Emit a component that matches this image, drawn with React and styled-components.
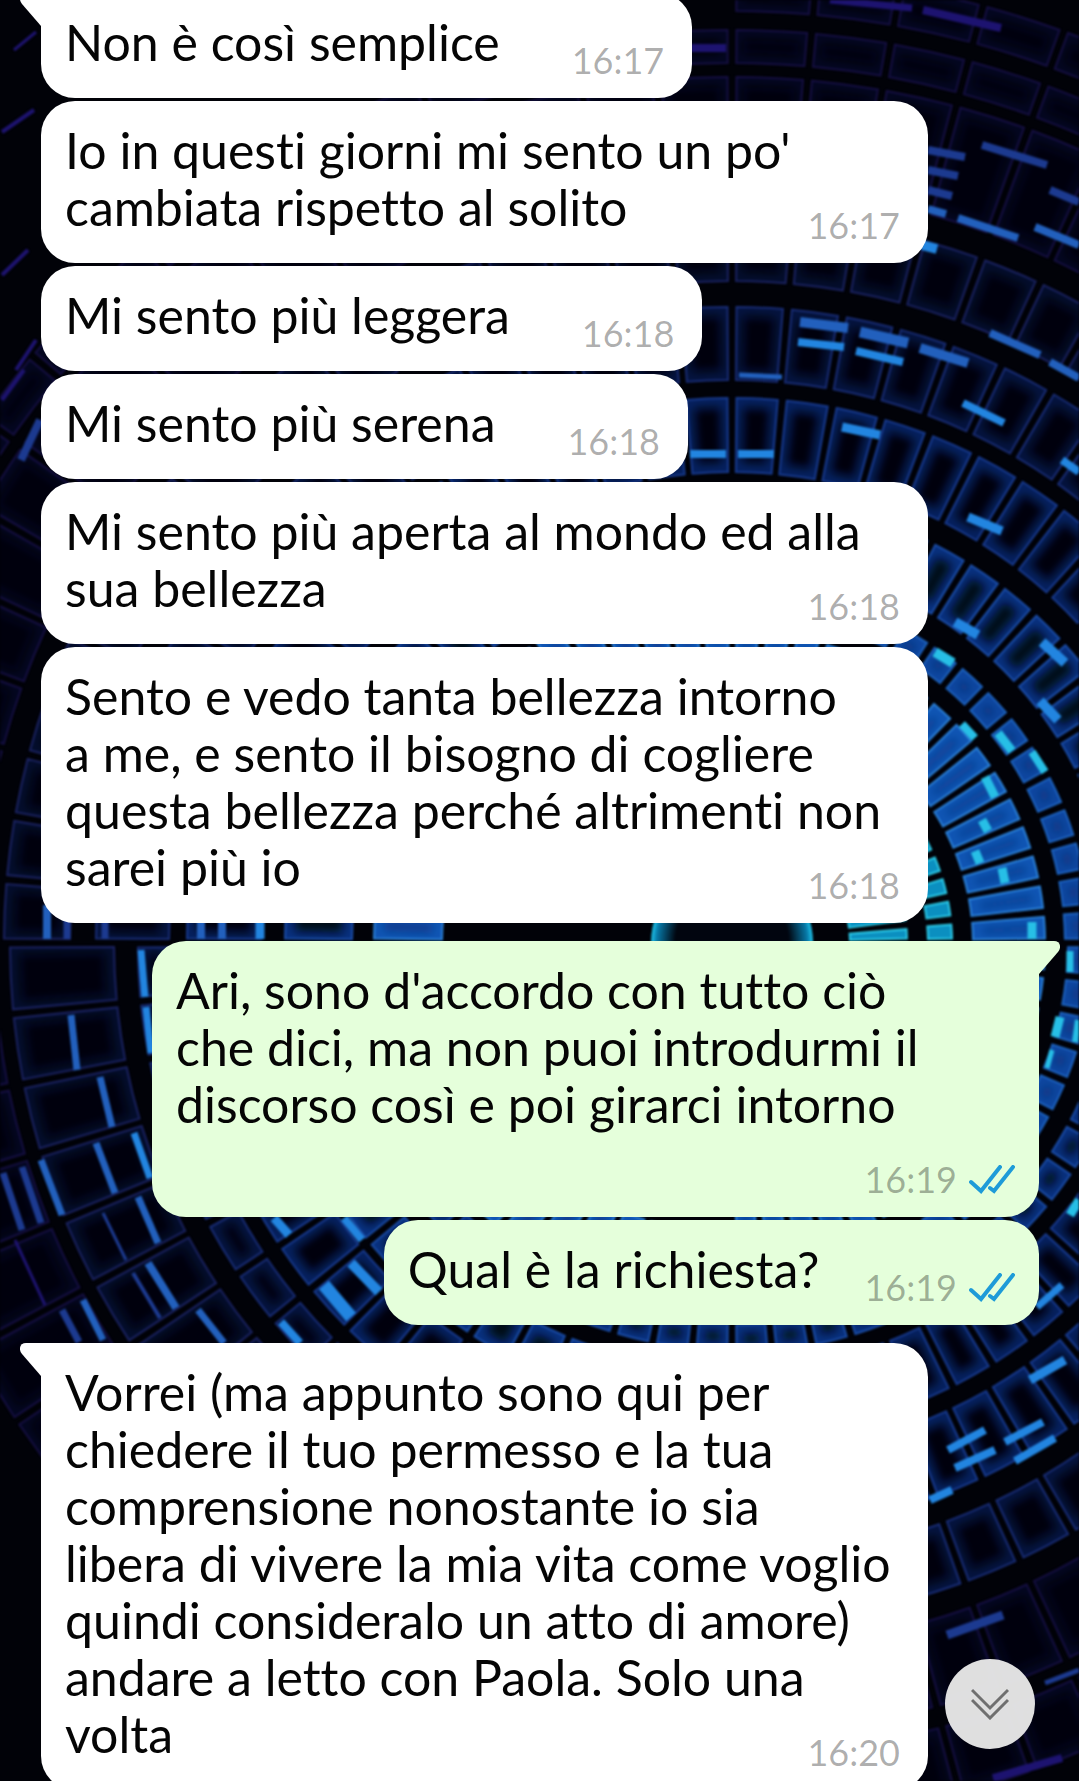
import React from "react";
import styled, { createGlobalStyle } from "styled-components";

const GlobalStyle = createGlobalStyle`
  *, *::before, *::after { box-sizing: border-box; }
  body { margin: 0; background: #010208; }
`;

const Screen = styled.main`
  position: relative;
  height: 100vh;
  overflow: hidden;
  background: #010208;
  font-family: Lato, "Open Sans", sans-serif;
  font-variant-ligatures: none;
`;

const WallpaperArt = styled.svg`
  position: absolute;
  inset: 0;
  width: 100%;
  height: 100%;
  filter: blur(1px);
`;

const Thread = styled.ol`
  position: relative;
  display: flex;
  flex-direction: column;
  gap: 18px;
  margin: -7px 0 0;
  padding: 0 40px 0 41px;
  list-style: none;
`;

const Group = styled.li`
  display: flex;
  flex-direction: column;
  align-items: ${(p) => (p.$sent ? "flex-end" : "flex-start")};
  gap: 3px;
`;

const Bubble = styled.article`
  position: relative;
  display: flow-root;
  width: ${(p) => (p.$wide ? "100%" : "auto")};
  max-width: calc(100% - 111px);
  padding: 21px ${(p) => (p.$sent ? 24 : 28)}px 27px 24px;
  border-radius: 34px;
  border-top-left-radius: ${(p) => (p.$tail && !p.$sent ? 0 : 34)}px;
  border-top-right-radius: ${(p) => (p.$tail && p.$sent ? 0 : 34)}px;
  background: ${(p) => (p.$sent ? "#e5ffdb" : "#ffffff")};
  color: #050505;
  font-size: 50px;
  line-height: 57px;
  white-space: pre-line;
`;

const Tail = styled.svg`
  position: absolute;
  top: 0;
  ${(p) => (p.$sent ? "left: 100%" : "right: 100%")};
  width: 21px;
  height: 33px;
  transform: ${(p) => (p.$sent ? "scaleX(-1)" : "none")};
  fill: ${(p) => (p.$sent ? "#e5ffdb" : "#ffffff")};
`;

const Meta = styled.span`
  float: right;
  display: flex;
  align-items: center;
  gap: 12px;
  height: 57px;
  margin: 18px 0 -18px ${(p) => (p.$sent ? 45 : 72)}px;
  color: rgba(0, 0, 0, 0.32);
  font-size: 36px;
`;

const Ticks = styled.svg`
  width: 46px;
  height: 30px;
  fill: none;
  stroke: #1e9bd8;
  stroke-width: 4;
  stroke-linecap: round;
  stroke-linejoin: miter;
`;

const ScrollButton = styled.button`
  position: absolute;
  right: 44px;
  bottom: 32px;
  display: grid;
  place-items: center;
  width: 90px;
  height: 90px;
  padding: 0;
  border: 0;
  border-radius: 50%;
  background: rgba(232, 232, 232, 0.96);
  cursor: pointer;

  svg {
    width: 38px;
    height: 32px;
    fill: none;
    stroke: #6f6f6f;
    stroke-width: 3;
  }
`;

const CX = 732;
const CY = 943;

const point = (r, deg) => {
  const a = (deg * Math.PI) / 180;
  return `${(CX + r * Math.sin(a)).toFixed(1)} ${(CY - r * Math.cos(a)).toFixed(1)}`;
};

const cellPath = (r0, r1, a0, a1) =>
  `M${point(r1, a0)}A${r1} ${r1} 0 0 1 ${point(r1, a1)}L${point(r0, a1)}A${r0} ${r0} 0 0 0 ${point(r0, a0)}Z`;

// Each sector: [start angle, end angle, rings as [inner radius, outer radius, cell count]]
const sectors = [
  [0, 90, [
    [118, 175, 15], [196, 220, 15], [241, 313, 16], [333, 358, 16], [385, 447, 17],
    [471, 545, 17], [563, 636, 18], [662, 728, 18], [755, 866, 18], [880, 913, 18], [932, 970, 18],
  ]],
  [90, 180, [
    [118, 175, 15], [241, 313, 16], [336, 361, 16], [382, 410, 16], [428, 495, 17],
    [515, 590, 18], [617, 680, 18], [706, 790, 18], [812, 880, 18],
  ]],
  [180, 270, [
    [290, 368, 16], [380, 407, 16], [427, 470, 16], [480, 544, 16], [562, 594, 16], [618, 722, 16], [738, 860, 16],
  ]],
  [270, 360, [
    [290, 358, 16], [380, 447, 16], [471, 545, 17], [563, 636, 18], [662, 728, 18],
    [755, 866, 18], [880, 913, 18],
  ]],
];

// [body, edge, centre] colours, fading from cyan at the core to indigo at the rim
const shade = (r) => {
  if (r < 230) return ["#0b8fc0", "#2bcbe8", "#0a78a8"];
  if (r < 330) return ["#1056b4", "#2a80d8", "#0a3a8c"];
  if (r < 380) return ["#0e47a0", "#1c62be", "#0a337c"];
  if (r < 460) return ["#08307e", "#1a4ca6", "#020718"];
  if (r < 560) return ["#05205e", "#17398c", "#010410"];
  if (r < 650) return ["#04133e", "#182c74", "#01030a"];
  if (r < 740) return ["#030d2c", "#1a2260", "#010208"];
  return ["#030620", "#150f42", "#010208"];
};

const cells = sectors.flatMap(([from, to, rings]) =>
  rings.flatMap(([r0, r1, count]) => {
    const step = (to - from) / count;
    const inset = (4.5 / r1) * 57.3;
    const deep = (12 / r1) * 57.3;
    const pad = Math.min(10, (r1 - r0) / 3);
    const [fill, stroke, centre] = shade((r0 + r1) / 2);
    return Array.from({ length: count }, (_, i) => {
      const a0 = from + i * step;
      const a1 = a0 + step;
      return {
        d: cellPath(r0, r1, a0 + inset, a1 - inset),
        hollow: deep * 2 < step ? cellPath(r0 + pad, r1 - pad, a0 + deep, a1 - deep) : null,
        fill,
        stroke,
        centre,
      };
    });
  })
);

// Lit bars: [x1, y1, x2, y2, colour key, thickness]
const tones = { c: "#27bfe6", b: "#2285e0", m: "#2260bd", d: "#1c3a90", i: "#1d1370" };
const bars = [
  [800, 322, 848, 328, "m", 10], [798, 342, 844, 347, "b", 8], [860, 332, 908, 343, "m", 11],
  [856, 351, 903, 362, "b", 8], [920, 348, 968, 363, "m", 10], [739, 375, 782, 377, "m", 5],
  [963, 403, 1004, 423, "b", 8], [690, 454, 726, 454, "b", 8], [738, 454, 774, 454, "b", 8],
  [842, 427, 880, 435, "b", 9], [990, 333, 1040, 355, "m", 8], [1050, 362, 1079, 378, "m", 8],
  [1062, 460, 1079, 472, "b", 8], [928, 150, 965, 157, "d", 8], [928, 170, 958, 176, "d", 8],
  [928, 190, 952, 196, "d", 8], [928, 209, 946, 214, "m", 8], [958, 218, 1018, 238, "m", 8],
  [982, 145, 1047, 165, "d", 8], [1050, 190, 1079, 202, "d", 8], [1035, 227, 1079, 245, "m", 8],
  [922, 245, 937, 249, "b", 10], [691, 48, 726, 48, "i", 8], [830, 0, 912, 8, "i", 7],
  [923, 10, 1001, 28, "i", 8],
  [968, 517, 1002, 531, "b", 9], [955, 622, 978, 635, "b", 10], [1042, 642, 1065, 663, "b", 10],
  [1040, 701, 1058, 720, "b", 10], [935, 652, 953, 663, "c", 10], [962, 724, 975, 738, "c", 8],
  [998, 733, 1012, 751, "c", 9], [1032, 752, 1045, 772, "c", 8], [985, 777, 995, 797, "c", 9],
  [982, 820, 988, 831, "c", 9], [975, 851, 980, 863, "c", 9], [1002, 868, 1005, 883, "c", 9],
  [1032, 922, 1032, 939, "c", 9], [1070, 951, 1070, 972, "c", 7], [1060, 1017, 1055, 1037, "c", 9],
  [1078, 1020, 1075, 1042, "c", 6], [1052, 1050, 1047, 1068, "c", 5], [1079, 1200, 1070, 1215, "c", 9],
  [1062, 1285, 1037, 1307, "b", 7],
  [1030, 1380, 1065, 1360, "b", 9], [948, 1450, 985, 1430, "b", 8], [955, 1468, 995, 1450, "b", 8],
  [1005, 1442, 1043, 1422, "b", 8], [1015, 1461, 1055, 1438, "b", 8], [930, 1500, 952, 1490, "b", 8],
  [947, 1635, 1003, 1615, "d", 9], [993, 1778, 1062, 1758, "i", 8], [1045, 1683, 1079, 1670, "d", 5],
  [141, 950, 145, 997, "b", 7], [146, 1007, 151, 1053, "b", 7], [71, 1015, 77, 1070, "m", 7],
  [100, 1077, 112, 1127, "m", 7], [96, 1143, 115, 1193, "m", 7], [134, 1133, 150, 1178, "b", 7],
  [3, 1173, 22, 1230, "d", 7], [22, 1167, 41, 1223, "d", 7], [41, 1160, 62, 1215, "m", 7],
  [138, 1197, 158, 1243, "m", 7], [148, 1263, 176, 1308, "m", 8], [103, 1213, 126, 1260, "d", 3],
  [133, 1273, 160, 1318, "d", 4], [83, 1300, 103, 1340, "m", 7], [62, 1310, 79, 1342, "d", 7],
  [198, 1310, 224, 1343, "m", 7], [281, 1322, 300, 1343, "b", 8], [324, 1285, 351, 1317, "b", 13],
  [351, 1263, 379, 1292, "b", 10], [274, 1218, 289, 1235, "b", 9], [344, 1218, 362, 1240, "b", 8],
  [15, 1240, 45, 1305, "i", 3], [47, 905, 47, 939, "m", 8], [67, 905, 67, 939, "d", 7],
  [105, 905, 105, 939, "d", 7], [201, 905, 201, 939, "m", 8], [222, 905, 222, 939, "m", 8],
  [260, 905, 260, 939, "b", 9], [40, 420, 21, 460, "d", 8], [36, 340, 16, 370, "i", 4],
  [24, 370, 2, 400, "i", 4], [28, 250, 2, 275, "i", 4], [34, 110, 2, 132, "i", 4],
  [36, 32, 14, 50, "i", 3],
];

function Wallpaper() {
  return (
    <WallpaperArt viewBox="0 0 1079 1781" preserveAspectRatio="xMidYMid slice" aria-hidden="true">
      <defs>
        <radialGradient id="core">
          <stop offset="0.7" stopColor="#01050f" />
          <stop offset="0.93" stopColor="#0779a8" />
          <stop offset="1" stopColor="#20c8ee" />
        </radialGradient>
        <filter id="soft" filterUnits="userSpaceOnUse" x="0" y="0" width="1079" height="1781">
          <feGaussianBlur stdDeviation="4" />
        </filter>
      </defs>
      <circle cx={CX} cy={CY} r="81" fill="url(#core)" />
      {cells.map((cell) => (
        <path key={cell.d} d={cell.d} fill={cell.fill} />
      ))}
      <g filter="url(#soft)">
        {cells.map((cell) => cell.hollow && <path key={cell.d} d={cell.hollow} fill={cell.centre} />)}
      </g>
      {cells.map((cell) => (
        <path key={cell.d} d={cell.d} fill="none" stroke={cell.stroke} strokeWidth="2" />
      ))}
      {bars.map(([x1, y1, x2, y2, tone, width]) => (
        <line
          key={`${x1}-${y1}-${x2}`}
          x1={x1}
          y1={y1}
          x2={x2}
          y2={y2}
          stroke={tones[tone]}
          strokeWidth={width}
        />
      ))}
    </WallpaperArt>
  );
}

const conversation = [
  {
    sent: false,
    messages: [
      { lines: ["Non è così semplice"], time: "16:17" },
      { lines: ["Io in questi giorni mi sento un po'", "cambiata rispetto al solito"], time: "16:17" },
      { lines: ["Mi sento più leggera"], time: "16:18" },
      { lines: ["Mi sento più serena"], time: "16:18" },
      { lines: ["Mi sento più aperta al mondo ed alla", "sua bellezza"], time: "16:18" },
      {
        lines: [
          "Sento e vedo tanta bellezza intorno",
          "a me, e sento il bisogno di cogliere",
          "questa bellezza perché altrimenti non",
          "sarei più io",
        ],
        time: "16:18",
      },
    ],
  },
  {
    sent: true,
    messages: [
      {
        lines: [
          "Ari, sono d'accordo con tutto ciò",
          "che dici, ma non puoi introdurmi il",
          "discorso così e poi girarci intorno",
        ],
        time: "16:19",
      },
      { lines: ["Qual è la richiesta?"], time: "16:19" },
    ],
  },
  {
    sent: false,
    messages: [
      {
        lines: [
          "Vorrei (ma appunto sono qui per",
          "chiedere il tuo permesso e la tua",
          "comprensione nonostante io sia",
          "libera di vivere la mia vita come voglio",
          "quindi consideralo un atto di amore)",
          "andare a letto con Paola. Solo una",
          "volta",
        ],
        time: "16:20",
      },
    ],
  },
];

function Message({ lines, time, sent, tail }) {
  return (
    <Bubble $sent={sent} $tail={tail} $wide={lines.length > 1}>
      {tail && (
        <Tail $sent={sent} viewBox="0 0 21 33" aria-hidden="true">
          <path d="M21 0H6C0 0-2 6 2 11L21 33Z" />
        </Tail>
      )}
      {lines.join("\n")}
      <Meta $sent={sent}>
        <time>{time}</time>
        {sent && (
          <Ticks viewBox="0 0 46 30" role="img" aria-label="Letto">
            <path d="M2 17L12 26L31 2M21 23L25 26L44 2" />
          </Ticks>
        )}
      </Meta>
    </Bubble>
  );
}

export default function App() {
  return (
    <Screen>
      <GlobalStyle />
      <Wallpaper />
      <Thread>
        {conversation.map((group, g) => (
          <Group key={g} $sent={group.sent}>
            {group.messages.map((message, m) => (
              <Message key={m} {...message} sent={group.sent} tail={m === 0} />
            ))}
          </Group>
        ))}
      </Thread>
      <ScrollButton type="button" aria-label="Vai in fondo">
        <svg viewBox="0 0 38 32" aria-hidden="true">
          <path d="M1 2L19 20L37 2M1 12L19 30L37 12" />
        </svg>
      </ScrollButton>
    </Screen>
  );
}
